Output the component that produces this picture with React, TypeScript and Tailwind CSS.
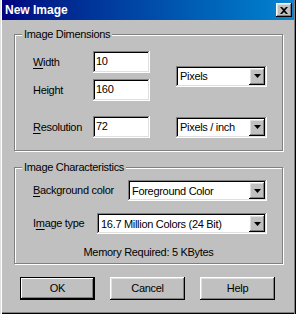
import { ReactNode } from 'react';

const raised =
  'shadow-[inset_-1px_-1px_#000,inset_1px_1px_#fff,inset_-2px_-2px_#808080,inset_2px_2px_#dfdfdf]';
const sunken =
  'shadow-[inset_-1px_-1px_#fff,inset_1px_1px_#808080,inset_-2px_-2px_#dfdfdf,inset_2px_2px_#000]';

function GroupBox({ label, className, children }: { label: string; className: string; children: ReactNode }) {
  return (
    <div
      className={`relative ml-[12px] w-[269px] border border-[#808080] shadow-[1px_1px_0_#fff,inset_1px_1px_0_#fff] ${className}`}
    >
      <span className="absolute -top-[8px] left-[7px] bg-[#c0c0c0] px-[2px] leading-[14px]">{label}</span>
      {children}
    </div>
  );
}

function TextField({ value }: { value: string }) {
  return (
    <div className={`h-[22px] w-[57px] bg-white pl-[3px] pt-[3px] leading-[14px] ${sunken}`}>{value}</div>
  );
}

function Combo({ value, width }: { value: string; width: string }) {
  return (
    <div className={`flex h-[21px] items-center bg-white pl-[4px] pr-[2px] ${width} ${sunken}`}>
      <span className="flex-1 leading-[14px]">{value}</span>
      <div className={`flex h-[17px] w-[16px] items-center justify-center bg-[#c0c0c0] ${raised}`}>
        <svg width="7" height="4" viewBox="0 0 7 4">
          <path d="M0 0h7L3.5 4z" fill="#000" />
        </svg>
      </div>
    </div>
  );
}

function Button({ children, primary }: { children: ReactNode; primary?: boolean }) {
  return (
    <div
      className={`flex h-[23px] w-[75px] items-center justify-center bg-[#c0c0c0] ${
        primary
          ? 'border border-black shadow-[inset_-1px_-1px_#000,inset_1px_1px_#fff,inset_-2px_-2px_#808080]'
          : raised
      }`}
    >
      {children}
    </div>
  );
}

export default function App() {
  return (
    <div
      className="h-[314px] w-[296px] bg-[#c0c0c0] px-[2px] text-[11px] tracking-[-0.3px] text-black shadow-[inset_1px_0_#dfdfdf,inset_2px_0_#fff,inset_-1px_0_#000,inset_-2px_0_#808080,inset_0_-1px_#000,inset_0_-2px_#808080]"
      style={{ fontFamily: '"Liberation Sans", Arial, sans-serif' }}
    >
      {/* Title bar */}
      <div className="flex h-[20px] items-center justify-between bg-linear-to-r from-[#000080] to-[#1084d0] pl-[3px] pr-[2px]">
        <span className="text-[12px] font-bold tracking-normal text-white">New Image</span>
        <div className={`flex h-[14px] w-[16px] items-center justify-center bg-[#c0c0c0] ${raised}`}>
          <svg width="8" height="7" viewBox="0 0 8 7">
            <path d="M0 0h2l2 2 2-2h2L5 3.5 8 7H6L4 5 2 7H0l3-3.5z" fill="#000" />
          </svg>
        </div>
      </div>

      <GroupBox label="Image Dimensions" className="mt-[14px] pb-[12px] pl-[18px] pr-[15px] pt-[16px]">
        <div className="flex items-center">
          <div className="flex flex-col gap-[6px]">
            <div className="flex items-center">
              <span className="w-[60px]">
                <span className="underline underline-offset-2">W</span>idth
              </span>
              <TextField value="10" />
            </div>
            <div className="flex items-center">
              <span className="w-[60px]">Height</span>
              <TextField value="160" />
            </div>
          </div>
          <div className="ml-auto">
            <Combo value="Pixels" width="w-[91px]" />
          </div>
        </div>
        <div className="mt-[15px] flex items-center">
          <span className="w-[60px]">
            <span className="underline underline-offset-2">R</span>esolution
          </span>
          <TextField value="72" />
          <div className="ml-auto">
            <Combo value="Pixels / inch" width="w-[91px]" />
          </div>
        </div>
      </GroupBox>

      <GroupBox label="Image Characteristics" className="mt-[16px] pb-[4px] pl-[18px] pr-[15px] pt-[12px]">
        <div className="flex items-center">
          <span>
            <span className="underline underline-offset-2">B</span>ackground color
          </span>
          <div className="ml-auto">
            <Combo value="Foreground Color" width="w-[139px]" />
          </div>
        </div>
        <div className="mt-[12px] flex items-center">
          <span>
            I<span className="underline underline-offset-2">m</span>age type
          </span>
          <div className="ml-auto">
            <Combo value="16.7 Million Colors (24 Bit)" width="w-[170px]" />
          </div>
        </div>
        <div className="mt-[11px] pr-[3px] text-center leading-[14px]">Memory Required: 5 KBytes</div>
      </GroupBox>

      <div className="ml-[18px] mt-[13px] flex gap-[15px]">
        <Button primary>OK</Button>
        <Button>Cancel</Button>
        <Button>Help</Button>
      </div>
    </div>
  );
}
